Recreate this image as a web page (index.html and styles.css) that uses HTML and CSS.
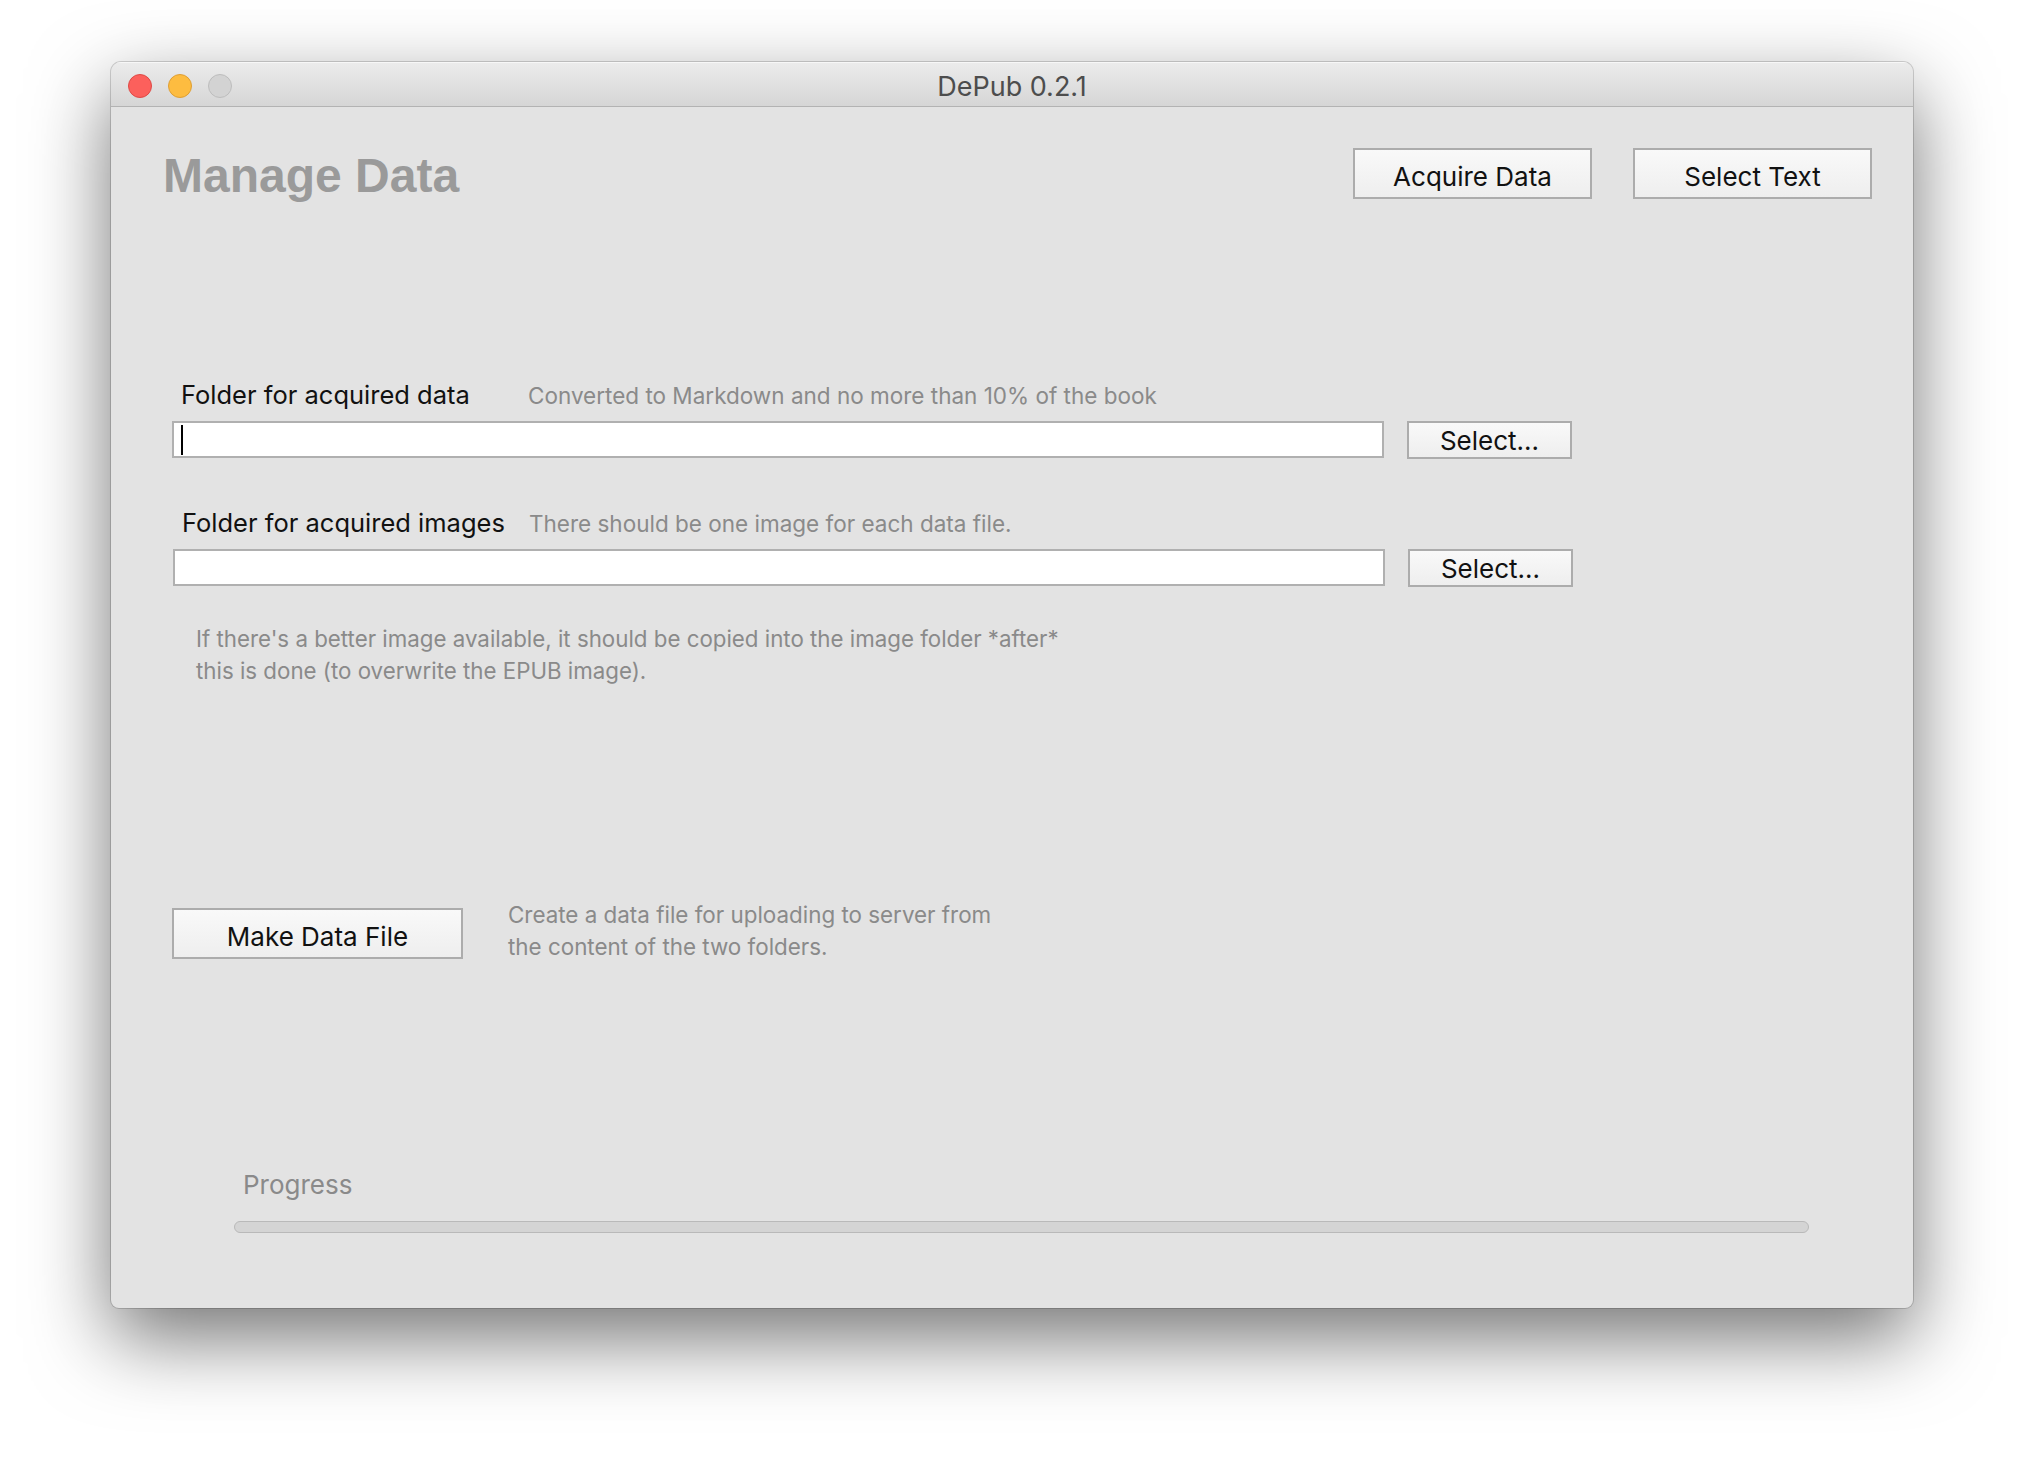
FILE: index.html
```html
<!DOCTYPE html>
<html lang="en">
<head>
<meta charset="utf-8">
<title>DePub 0.2.1</title>
<link rel="stylesheet" href="styles.css">
</head>
<body>
<div class="window">
  <div class="titlebar">
    <div class="lights">
      <span class="light light-close"></span>
      <span class="light light-min"></span>
      <span class="light light-max"></span>
    </div>
    <div class="title">DePub 0.2.1</div>
    <div class="titlebar-spacer"></div>
  </div>
  <div class="content">
    <div class="header">
      <h1 class="heading">Manage Data</h1>
      <div class="nav">
        <button class="btn btn-nav">Acquire Data</button>
        <button class="btn btn-nav">Select Text</button>
      </div>
    </div>

    <div class="group group-data">
      <div class="label-row">
        <span class="label">Folder for acquired data</span>
        <span class="hint">Converted to Markdown and no more than 10% of the book</span>
      </div>
      <div class="field-row">
        <div class="field"><span class="caret"></span></div>
        <button class="btn btn-select">Select...</button>
      </div>
    </div>

    <div class="group group-images">
      <div class="label-row">
        <span class="label">Folder for acquired images</span>
        <span class="hint">There should be one image for each data file.</span>
      </div>
      <div class="field-row">
        <div class="field"></div>
        <button class="btn btn-select">Select...</button>
      </div>
    </div>

    <p class="note">If there's a better image available, it should be copied into the image folder *after*<br>this is done (to overwrite the EPUB image).</p>

    <div class="make-row">
      <button class="btn btn-make">Make Data File</button>
      <p class="make-desc">Create a data file for uploading to server from<br>the content of the two folders.</p>
    </div>

    <div class="progress">
      <div class="progress-label">Progress</div>
      <div class="progress-bar"></div>
    </div>
  </div>
</div>
</body>
</html>
```

FILE: styles.css
```css
* {
  box-sizing: border-box;
}

html,
body {
  margin: 0;
  padding: 0;
  background: #ffffff;
}

body {
  min-height: 1468px;
  padding: 62px 0 160px;
  font-family: Inter, "Liberation Sans", sans-serif;
  color: #111111;
}

.window {
  width: 1802px;
  height: 1246px;
  margin: 0 auto;
  background: #e3e3e3;
  border-radius: 10px 10px 8px 8px;
  box-shadow: 0 0 0 1px rgba(0, 0, 0, 0.16), 0 30px 80px rgba(0, 0, 0, 0.55);
  overflow: hidden;
  display: flex;
  flex-direction: column;
}

/* ---------- title bar ---------- */
.titlebar {
  height: 45px;
  flex: none;
  display: grid;
  grid-template-columns: 1fr auto 1fr;
  align-items: center;
  padding: 3px 17px 0;
  background: linear-gradient(#ececec, #d6d6d6);
  border-bottom: 1px solid #b3b3b3;
  box-shadow: inset 0 1px 0 rgba(255, 255, 255, 0.6);
}

.lights {
  display: flex;
  gap: 16px;
}

.light {
  width: 24px;
  height: 24px;
  border-radius: 50%;
  display: block;
}

.light-close {
  background: #fc605c;
  border: 1px solid #de4a46;
}

.light-min {
  background: #fdbc40;
  border: 1px solid #de9f34;
}

.light-max {
  background: #d3d3d3;
  border: 1px solid #bdbdbd;
}

.title {
  font-size: 27px;
  color: #4d4d4d;
  line-height: 32px;
  padding-top: 2px;
}

/* ---------- content ---------- */
.content {
  flex: 1;
  padding: 41px 41px 0 0;
  display: flex;
  flex-direction: column;
}

.header {
  height: 51px;
  display: flex;
  justify-content: space-between;
  align-items: center;
  padding-left: 52px;
}

.heading {
  margin: 0;
  padding-top: 3px;
  font-family: "Liberation Sans", Arial, sans-serif;
  font-weight: bold;
  font-size: 48px;
  line-height: 51px;
  color: #9a9a9a;
}

.nav {
  display: flex;
  gap: 41px;
}

.btn {
  font-family: Inter, "Liberation Sans", sans-serif;
  font-size: 26px;
  color: #111111;
  background: linear-gradient(#f9f9f9, #eeeeee);
  border: 2px solid #acacac;
  border-radius: 0;
  padding: 0;
  margin: 0;
}

.btn-nav {
  width: 239px;
  height: 51px;
  padding-top: 6px;
}

.group {
  padding-left: 61px;
}

.group-data {
  margin-top: 180px;
}

.group-images {
  margin-top: 48px;
  padding-left: 62px;
}

.label-row {
  height: 32px;
  display: flex;
  align-items: baseline;
  padding-left: 9px;
  margin-bottom: 10px;
}

.label {
  flex: none;
  width: 347px;
  font-size: 25.5px;
  line-height: 32px;
  color: #111111;
}

.hint {
  font-size: 22.5px;
  line-height: 32px;
  color: #8a8a8a;
}

.field-row {
  display: flex;
  align-items: flex-start;
  gap: 23px;
}

.field {
  width: 1212px;
  height: 37px;
  background: #ffffff;
  border: 2px solid #b0b0b0;
}

.caret {
  display: block;
  width: 2px;
  height: 30px;
  margin: 2px 0 0 7px;
  background: #000000;
}

.btn-select {
  width: 165px;
  height: 38px;
}

.note {
  margin: 36px 0 0;
  padding-left: 85px;
  font-size: 22.3px;
  line-height: 32px;
  color: #8a8a8a;
}

.make-row {
  margin-top: 212px;
  padding-left: 61px;
  display: flex;
  align-items: flex-start;
  gap: 45px;
}

.btn-make {
  width: 291px;
  height: 51px;
  margin-top: 9px;
  padding-top: 6px;
}

.make-desc {
  margin: 0;
  font-size: 22.4px;
  line-height: 32px;
  color: #8a8a8a;
}

.progress {
  margin-top: 206px;
}

.progress-label {
  padding-left: 132px;
  font-size: 26px;
  line-height: 32px;
  color: #8a8a8a;
}

.progress-bar {
  margin: 20px 0 0 123px;
  width: 1575px;
  height: 12px;
  border-radius: 6px;
  background: #d4d4d4;
  border: 1px solid #b9b9b9;
}
```
